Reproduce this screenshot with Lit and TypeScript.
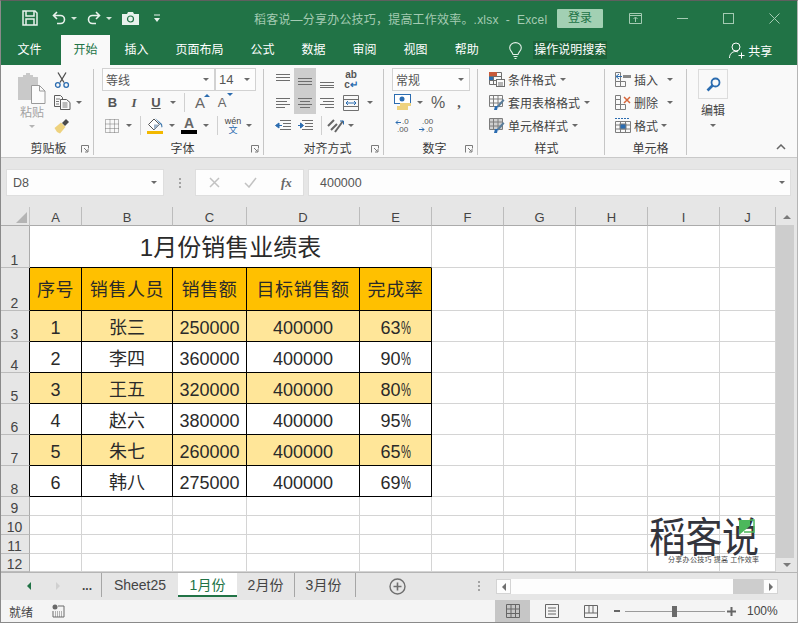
import { LitElement, html, css, svg } from "lit";
import { customElement } from "lit/decorators.js";

const base = css`
  * { box-sizing: border-box; }
  svg { display: block; flex: none; }
  .caret {
    display: block;
    width: 0;
    height: 0;
    border-left: 3px solid transparent;
    border-right: 3px solid transparent;
    border-top: 3px solid #6a6a6a;
  }
`;

const caret = html`<i class="caret"></i>`;

const ic = {
  paste: html`<svg width="30" height="31" viewBox="0 0 30 31">
    <path d="M1 4h5V2h3V0h4v2h3v2h5v23H1z" fill="#c9c9c9"/>
    <path d="M14.500 12.500h8l5.500 5.500v12.500h-13.500z" fill="#fbfbfb" stroke="#9a9a9a"/>
    <path d="M22.500 12.500v5.500h5.500" fill="none" stroke="#9a9a9a"/></svg>`,
  cut: html`<svg width="16" height="16" viewBox="0 0 16 16" fill="none">
    <path d="M4 0.500l6 10M12 0.500l-6 10" stroke="#4f4f4f" stroke-width="1.300"/>
    <circle cx="3.800" cy="13" r="2.300" stroke="#2b6cb0" stroke-width="1.300"/>
    <circle cx="12.200" cy="13" r="2.300" stroke="#2b6cb0" stroke-width="1.300"/></svg>`,
  copy: html`<svg width="17" height="15" viewBox="0 0 17 15" fill="none" stroke="#5c5c5c">
    <path d="M0.500 0.500h6l2 2v9h-8z"/><path d="M6.500 4.500h6l3.500 3v7h-9.500z" fill="#fbfbfb"/>
    <path d="M2 4h4M2 6.500h3M2 9h3M8.500 8h5M8.500 10h5M8.500 12h5" stroke="#7a7a7a"/></svg>`,
  brush: html`<svg width="16" height="16" viewBox="0 0 16 16">
    <path d="M0.500 10L7 4.500l4.500 4.500L6 15.500 3 14z" fill="#eed27e"/>
    <path d="M8 5l4-4 3 3-4 4z" fill="#4a4a4a"/></svg>`,
  bucket: html`<svg width="17" height="16" viewBox="0 0 17 16">
    <path d="M7 1L1.500 6.500 7 12l5.500-5.500z" fill="#fff" stroke="#555"/>
    <path d="M7 6.500h5.500L7 12z" fill="#9fb4c9"/>
    <path d="M8 0l7 6 .5 3-1 .5-.5-2.500z" fill="#3f78ad"/>
    <rect y="13" width="16" height="3.500" fill="#f2b800"/></svg>`,
  search: html`<svg width="15" height="15" viewBox="0 0 15 15" fill="none">
    <circle cx="9.500" cy="5.500" r="4" stroke="#2b6cb0" stroke-width="1.800"/>
    <path d="M6.500 8.500L1.500 13.500" stroke="#2b6cb0" stroke-width="2.600"/></svg>`,
  bulb: html`<svg width="13" height="17" viewBox="0 0 13 17" fill="none" stroke="#e5f0ea" stroke-width="1.100">
    <path d="M4 12.500C3.500 10 .7 8.800.7 5.800a5.800 5.200 0 0 1 11.600 0c0 3-2.800 4.200-3.300 6.700z"/><path d="M4.500 14.500h4M5.500 16.500h2"/></svg>`,
  user: html`<svg width="16" height="17" viewBox="0 0 16 17" fill="none" stroke="#fff">
    <circle cx="7" cy="5" r="4"/><path d="M.5 16c0-4 2.500-6.500 6.500-6.500 1 0 1.500.2 2 .4"/><path d="M9.500 13.500h6M12.500 10.500v6"/></svg>`,
};

const lines = (ys: number[], xs: [number, number][]) =>
  html`<svg width="15" height="16" viewBox="0 0 15 16" stroke="#6e6e6e">
    ${ys.map((y, i) => svg`<path d="M${xs[i][0]} ${y + 0.5}H${xs[i][1]}"/>`)}</svg>`;

const indent = (flip: boolean) => html`<svg width="16" height="11" viewBox="0 0 16 11">
    <path d="M5 .5h11M8 3.500h8M8 6.500h8M5 9.500h11" stroke="#6e6e6e"/>
    <path d="${flip ? "M1 5.500h4M3.500 3l3 2.500-3 2.500z" : "M3 5.500h4M4 3L.500 5.500 4 8z"}" fill="#2b6cb0" stroke="#2b6cb0"/></svg>`;

@customElement("ribbon-bar")
export class RibbonBar extends LitElement {
  static styles = [base, css`
    :host {
      display: flex;
      height: 93px;
      padding: 3px 0 0 4px;
      background: #f9f9f9;
      border-bottom: 1px solid #c9c9c9;
      font: 12px "Liberation Sans", "Noto Sans CJK SC", sans-serif;
      color: #444;
    }
    .sep { flex: none; width: 1px; height: 86px; margin-top: 1px; background: #c6c6c6; }
    .group { flex: none; display: flex; flex-direction: column; height: 89px; }
    .body { height: 73px; flex: none; }
    .label {
      display: grid;
      grid-template-columns: 1fr auto 1fr;
      align-items: center;
      height: 16px;
      line-height: 16px;
      color: #3a3a3a;
    }
    .label span { grid-column: 2; }
    .launch { justify-self: end; margin-right: 4px; }
    .row { display: flex; align-items: center; height: 23px; }
    .cell { display: flex; align-items: center; justify-content: center; height: 23px; }

    .g1 { width: 89px; }
    .g1 .body { display: flex; padding-left: 13px; }
    .paste { width: 30px; color: #a3a3a3; display: flex; flex-direction: column; align-items: center; padding-top: 5px; }
    .paste b { font-weight: 400; font-size: 12px; line-height: 14px; margin-top: 2px; }
    .paste .caret { margin-top: 5px; border-top-color: #b5b5b5; }
    .clip { margin-left: 7px; width: 36px; }
    .clip .row { gap: 5px; }

    .g2 { width: 169px; padding-left: 8px; }
    .combo {
      display: flex;
      align-items: center;
      justify-content: space-between;
      height: 23px;
      padding: 0 5px 0 3px;
      background: #fdfdfd;
      border: 1px solid #d2d2d2;
      font-size: 12px;
      color: #555;
    }
    .fonts { display: flex; }
    .fonts .name { width: 114px; border-right-width: 2px; }
    .fonts .size { width: 40px; border-left: none; font-size: 13px; }
    .f2, .f3 { display: grid; height: 23px; }
    .f2 { grid-template-columns: 21px 22px 22px 12px 10px 22px 22px; }
    .f3 { grid-template-columns: 20px 14px 8px 23px 10px 24px 10px 12px 20px 12px; }
    .bar { display: block; width: 1px; height: 19px; background: #d0d0d0; }
    .bold, .ital, .und { font: 700 13px "Liberation Sans", sans-serif; color: #555; }
    .ital { font: italic 700 13px "Liberation Serif", serif; }
    .und { text-decoration: underline; }
    .grow { position: relative; font: 15px "Liberation Sans", sans-serif; color: #666; }
    .grow.small { font-size: 13px; }
    .tri { position: absolute; right: 1px; top: 3px; width: 0; height: 0; border: 3px solid transparent; border-top: none; border-bottom: 3px solid #2b6cb0; }
    .tri.down { top: 2px; right: 0; border-bottom: none; border-top: 3px solid #2b6cb0; }
    .fc { display: flex; flex-direction: column; align-items: center; font: 700 14px/13px "Liberation Sans", sans-serif; color: #666; }
    .fc i { display: block; width: 16px; height: 4px; background: #000; }
    .wen { display: flex; flex-direction: column; align-items: center; font-size: 9px; line-height: 9px; color: #444; }
    .wen em { font-style: normal; color: #2b6cb0; font-size: 9px; }

    .g3 { width: 119px; padding-left: 8px; }
    .al { display: grid; grid-template-columns: 22px 22px 22px 26px 12px; grid-template-rows: 23px 23px; }
    .al .sel { grid-column: 2; grid-row: 1 / 3; background: #cecece; }
    .al .cell { grid-row: 1; z-index: 1; }
    .al .cell.r2 { grid-row: 2; }
    .c1 { grid-column: 1; } .c2 { grid-column: 2; } .c3 { grid-column: 3; } .c4 { grid-column: 4; } .c5 { grid-column: 5; }
    .al3 { display: grid; grid-template-columns: 22px 22px 10px 20px 10px; height: 23px; }
    .abc { display: flex; flex-direction: column; align-items: center; font: 700 10px/10px "Liberation Sans", sans-serif; color: #555; }
    .abc em { font-style: normal; color: #2b6cb0; }

    .g4 { width: 93px; padding-left: 8px; }
    .g4 .combo { width: 78px; }
    .nm { display: grid; grid-template-columns: 22px 12px 24px 18px; height: 23px; }
    .pct { font: 16px "Liberation Sans", sans-serif; color: #5a5a5a; }
    .comma { font: 700 14px "Liberation Serif", serif; color: #555; }
    .dec { gap: 9px; padding-left: 3px; justify-content: flex-start; }
    .dec text { font: 8px "Liberation Sans", sans-serif; fill: #555; }

    .g5 { width: 126px; padding: 0 0 0 11px; }
    .g5 .row, .g6 .row { height: 23px; gap: 3px; }
    .g5 .caret, .g6 .caret { margin-left: 1px; }
    .g6 { width: 81px; padding-left: 10px; }
    .g6 .wide { width: 12px; display: flex; justify-content: flex-end; }
    .g6 .caret { margin-left: 0; }

    .g7 { width: 52px; align-items: center; }
    .g7 .body { display: flex; flex-direction: column; align-items: center; }
    .find { width: 30px; height: 30px; margin-top: 1px; border: 1px solid #dcdcdc; display: flex; align-items: center; justify-content: center; }
    .g7 span { margin-top: 4px; line-height: 16px; }
    .g7 .caret { margin-top: 5px; }
    .fold { margin: 76px 0 0 37px; }
  `];

  launcher() {
    return html`<svg class="launch" width="8" height="8" viewBox="0 0 8 8" fill="none" stroke="#7a7a7a">
      <path d="M.5 7.500v-7h7v3M3 3l3.500 3.500M7 4v3H4"/></svg>`;
  }

  label(t: string, launch = true) {
    return html`<div class="label"><span>${t}</span>${launch ? this.launcher() : ""}</div>`;
  }

  styleIcon(k: number) {
    if (k === 0)
      return html`<svg width="16" height="15" viewBox="0 0 16 15" stroke="#6e6e6e" fill="none">
        <path d="M.5.500h12v12H.5zM.5 4.500h12M.5 8.500h12M4.500.5v12"/>
        <rect y="0" width="8" height="4" fill="#c85a3a" stroke="none"/><rect y="5" width="4" height="3" fill="#2b6cb0" stroke="none"/>
        <rect x="7.500" y="7.500" width="8" height="7" fill="#fbfbfb"/><path d="M9 11h5M9 13h5"/></svg>`;
    return html`<svg width="16" height="15" viewBox="0 0 16 15" stroke="#7c7c7c" fill="none">
        ${k === 2 ? svg`<rect x="1" y="1" width="12" height="10" fill="#cfcfcf" stroke="none"/>` : ""}
        <path d="M.5.500h13v11H.5zM.5 4h13M.5 8h13M4.500.5v11M9 .5v11"/>
        <path d="M8 11l6-7 1.500 1.500-6 7z" fill="#5a7d9a" stroke="none"/>
        <path d="M5 15l1-4h3l-1 4z" fill="#2b6cb0" stroke="none"/></svg>`;
  }

  cellIcon(k: number) {
    const mark = [
      svg`<path d="M8 5.500h8" stroke="#888" stroke-width="3"/><path d="M1 5.500h6M4 3L1 5.500 4 8" stroke="#2b6cb0" fill="none"/>`,
      svg`<path d="M9 3l6 6M15 3l-6 6" stroke="#d6663a" stroke-width="1.500"/>`,
      svg`<path d="M.5 4.500h15v11H.5zM5.500 4.500v11M10.500 4.500v11M.5 8h15M.5 12h15"/><rect x="5" y="7" width="6" height="5" fill="#2b6cb0"/><path d="M0 1.500h15" stroke="#2b6cb0" stroke-dasharray="2 1"/>`,
    ][k];
    return html`<svg width="16" height="17" viewBox="0 0 16 17" stroke="#7c7c7c" fill="none">
      ${k < 2 ? svg`<path d="M.5 1.500h5v4h-5zM.5 5.500h5v5h-5zM.5 10.500h5v5h-5zM5.500 10.500h5v5h-5z"/>` : ""}${mark}</svg>`;
  }

  render() {
    return html`
      <div class="group g1">
        <div class="body">
          <div class="paste">${ic.paste}<b>粘贴</b>${caret}</div>
          <div class="clip">
            <div class="row">${ic.cut}</div>
            <div class="row">${ic.copy}${caret}</div>
            <div class="row">${ic.brush}</div>
          </div>
        </div>
        ${this.label("剪贴板")}
      </div>
      <div class="sep"></div>

      <div class="group g2">
        <div class="body">
          <div class="fonts">
            <div class="combo name">等线${caret}</div>
            <div class="combo size">14${caret}</div>
          </div>
          <div class="f2">
            <div class="cell bold">B</div>
            <div class="cell ital">I</div>
            <div class="cell und">U</div>
            <div class="cell">${caret}</div>
            <div class="cell"><i class="bar"></i></div>
            <div class="cell grow">A<i class="tri"></i></div>
            <div class="cell grow small">A<i class="tri down"></i></div>
          </div>
          <div class="f3">
            <div class="cell"><svg width="14" height="14" viewBox="0 0 14 14" fill="none" stroke="#777" stroke-dasharray="1 1"><path d="M.5.500h13v13H.5zM.5 5h13M.5 9.500h13M5 .5v13M9.500.5v13"/></svg></div>
            <div class="cell">${caret}</div>
            <div class="cell"><i class="bar"></i></div>
            <div class="cell">${ic.bucket}</div>
            <div class="cell">${caret}</div>
            <div class="cell fc">A<i></i></div>
            <div class="cell">${caret}</div>
            <div class="cell"><i class="bar"></i></div>
            <div class="cell wen">wén<em>文</em></div>
            <div class="cell">${caret}</div>
          </div>
        </div>
        ${this.label("字体")}
      </div>
      <div class="sep"></div>

      <div class="group g3">
        <div class="body">
          <div class="al">
            <div class="sel"></div>
            <div class="cell c1">${lines([2, 5, 8], [[0, 14], [0, 14], [0, 14]])}</div>
            <div class="cell c2">${lines([6, 9, 12], [[0, 14], [0, 14], [0, 14]])}</div>
            <div class="cell c3">${lines([10, 13, 15], [[0, 14], [0, 14], [0, 14]])}</div>
            <div class="cell c4 abc">ab<span>c<em>↵</em></span></div>
            <div class="cell c1 r2">${lines([3, 6, 9, 12], [[0, 14], [0, 11], [0, 14], [0, 9]])}</div>
            <div class="cell c2 r2">${lines([3, 6, 9, 12], [[0, 14], [2, 12], [0, 14], [2, 12]])}</div>
            <div class="cell c3 r2">${lines([3, 6, 9, 12], [[0, 14], [3, 14], [0, 14], [5, 14]])}</div>
            <div class="cell c4 r2"><svg width="16" height="16" viewBox="0 0 16 16" fill="none" stroke="#707070"><path d="M.5.500h15v15H.5zM.5 4.500h15M.5 11.500h15"/><path d="M3 8h10M5 6L3 8l2 2M11 6l2 2-2 2" stroke="#2b6cb0"/></svg></div>
            <div class="cell c5 r2">${caret}</div>
          </div>
          <div class="al3">
            <div class="cell">${indent(false)}</div>
            <div class="cell">${indent(true)}</div>
            <div class="cell"><i class="bar"></i></div>
            <div class="cell"><svg width="18" height="16" viewBox="0 0 18 16" fill="none"><path d="M1 8l6-6M4 12l6-6M8 14L16 3" stroke="#666" stroke-width="2"/><path d="M13 3h3.500v3.500" stroke="#2b6cb0"/></svg></div>
            <div class="cell">${caret}</div>
          </div>
        </div>
        ${this.label("对齐方式")}
      </div>
      <div class="sep"></div>

      <div class="group g4">
        <div class="body">
          <div class="combo">常规${caret}</div>
          <div class="nm">
            <div class="cell"><svg width="18" height="17" viewBox="0 0 18 17"><rect x=".5" y=".5" width="16" height="9" fill="#fff" stroke="#2b6cb0"/><circle cx="8" cy="5" r="2.500" fill="#2b6cb0"/><rect x="6" y="9" width="11" height="3" fill="#eed27e"/><rect x="3" y="12" width="11" height="4" fill="#eed27e"/></svg></div>
            <div class="cell">${caret}</div>
            <div class="cell pct">%</div>
            <div class="cell comma">,</div>
          </div>
          <div class="row dec">
            <svg width="15" height="16" viewBox="0 0 15 16"><path d="M1 4.500h5M3 2.500l-2 2 2 2" fill="none" stroke="#2b6cb0"/><text x="7" y="6">.0</text><text x="2" y="14">.00</text></svg>
            <svg width="15" height="16" viewBox="0 0 15 16"><text x="3" y="6">.00</text><path d="M0 11.500h5M3 9.500l2 2-2 2" fill="none" stroke="#2b6cb0"/><text x="7" y="14">.0</text></svg>
          </div>
        </div>
        ${this.label("数字")}
      </div>
      <div class="sep"></div>

      <div class="group g5">
        <div class="body">
          <div class="row">${this.styleIcon(0)}条件格式${caret}</div>
          <div class="row">${this.styleIcon(1)}套用表格格式${caret}</div>
          <div class="row">${this.styleIcon(2)}单元格样式${caret}</div>
        </div>
        ${this.label("样式", false)}
      </div>
      <div class="sep"></div>

      <div class="group g6">
        <div class="body">
          <div class="row">${this.cellIcon(0)}插入<span class="wide">${caret}</span></div>
          <div class="row">${this.cellIcon(1)}删除<span class="wide">${caret}</span></div>
          <div class="row">${this.cellIcon(2)}格式${caret}</div>
        </div>
        ${this.label("单元格", false)}
      </div>
      <div class="sep"></div>

      <div class="group g7">
        <div class="body">
          <div class="find">${ic.search}</div>
          <span>编辑</span>
          ${caret}
        </div>
      </div>
      <svg class="fold" width="10" height="6" viewBox="0 0 10 6" fill="none" stroke="#666" stroke-width="1.500"><path d="M1 5l4-4 4 4"/></svg>
    `;
  }
}

const columns = ["A", "B", "C", "D", "E", "F", "G", "H", "I", "J"];
const heads = ["序号", "销售人员", "销售额", "目标销售额", "完成率"];
const people: [string, string, number, number, number][] = [
  ["1", "张三", 250000, 400000, 63],
  ["2", "李四", 360000, 400000, 90],
  ["3", "王五", 320000, 400000, 80],
  ["4", "赵六", 380000, 400000, 95],
  ["5", "朱七", 260000, 400000, 65],
  ["6", "韩八", 275000, 400000, 69],
];

@customElement("sheet-view")
export class SheetView extends LitElement {
  static styles = [base, css`
    :host { display: block; position: relative; width: 776px; height: 365px; overflow: hidden; }
    .grid {
      display: grid;
      grid-template-columns: 30px 52px 91px 74px 113px 72px 72px 72px 72px 72px 56px;
      grid-template-rows: 19px 42px 43px repeat(6, 31px) 19px 19px 19px 18px;
      background: #fff;
      font: 18px/24px "Liberation Sans", "Noto Sans CJK SC", sans-serif;
      color: #2a2a2a;
    }
    .corner, .ch, .rh { background: #e6e6e6; }
    .corner { border-right: 1px solid #c4c4c4; border-bottom: 1px solid #ababab; padding: 5px 0 0 16px; }
    .corner i { display: block; width: 11px; height: 11px; background: #b4b4b4; clip-path: polygon(100% 0, 100% 100%, 0 100%); }
    .ch {
      display: flex; align-items: center; justify-content: center;
      border-right: 1px solid #bcbcbc;
      border-bottom: 1px solid #ababab;
      font-size: 13px; line-height: 18px; color: #444; padding-top: 3px;
    }
    .rh {
      display: flex; align-items: flex-end; justify-content: center;
      border-right: 1px solid #ababab;
      border-bottom: 1px solid #bcbcbc;
      font-size: 14px; line-height: 14px; color: #444;
    }
    .rh.dark { border-right-color: #000; }
    .c {
      border-right: 1px solid #d4d4d4;
      border-bottom: 1px solid #d4d4d4;
    }
    .t {
      display: flex; align-items: center; justify-content: center;
      border-right: 1px solid #000;
      border-bottom: 1px solid #000;
      padding-top: 4px;
      white-space: nowrap;
    }
    .title {
      grid-column: span 5;
      display: flex; align-items: center; justify-content: center;
      border-right: 1px solid #d4d4d4;
      border-bottom: 1px solid #000;
      font-size: 24px; line-height: 30px; padding-top: 2px;
    }
    .head { background: #ffc000; padding-top: 2px; letter-spacing: .6px; }
    .band { background: #ffe699; }
    .sign { display: inline-block; width: 10px; transform: scaleX(.62); transform-origin: left; }
    .logo {
      position: absolute; left: 649px; top: 306px; width: 114px;
      font-family: "Noto Sans CJK SC", sans-serif; color: #33343c;
    }
    .logo b {
      display: block; font-weight: 400; font-size: 37px; line-height: 38px; white-space: nowrap;
      transform: scaleY(1.12); transform-origin: top; letter-spacing: -.5px;
    }
    .logo span { display: block; margin: 5px 0 0 19px; font-size: 7px; line-height: 7px; letter-spacing: .3px; white-space: nowrap; color: #444; }
    .logo svg { position: absolute; left: 89px; top: 5px; }
  `];

  render() {
    return html`
      <div class="grid">
        <div class="corner"><i></i></div>
        ${columns.map((c) => html`<div class="ch">${c}</div>`)}

        <div class="rh">1</div>
        <div class="title">1月份销售业绩表</div>
        ${columns.slice(5).map(() => html`<div class="c"></div>`)}

        <div class="rh dark">2</div>
        ${heads.map((h) => html`<div class="t head">${h}</div>`)}
        ${columns.slice(5).map(() => html`<div class="c"></div>`)}

        ${people.map((p, i) => html`
          <div class="rh dark">${i + 3}</div>
          ${p.slice(0, 4).map((v) => html`<div class="t ${i % 2 ? "" : "band"}">${v}</div>`)}
          <div class="t ${i % 2 ? "" : "band"}">${p[4]}<span class="sign">%</span></div>
          ${columns.slice(5).map(() => html`<div class="c"></div>`)}
        `)}

        ${[9, 10, 11, 12].map((r) => html`
          <div class="rh">${r}</div>
          ${columns.map(() => html`<div class="c"></div>`)}
        `)}
      </div>
      <div class="logo">
        <b>稻客说</b>
        <svg width="18" height="18" viewBox="0 0 18 18"><path d="M1 2h11v6L1 17z" fill="#4cb85c"/><path d="M12 2h4v12H6" fill="none" stroke="#4cb85c" stroke-width="1.500"/></svg>
        <span>分享办公技巧 提高 工作效率</span>
      </div>
    `;
  }
}

@customElement("app-root")
export class AppRoot extends LitElement {
  static styles = [base, css`
    :host {
      display: block;
      position: relative;
      width: 798px;
      height: 623px;
      overflow: hidden;
      background: #e6e6e6;
      font: 12px "Liberation Sans", "Noto Sans CJK SC", sans-serif;
    }
    .frame {
      position: absolute; inset: 0; pointer-events: none;
      border: 1px solid #8a8a8a; border-top-color: #5f5f5f; border-right-color: #b5b5b5;
    }

    .titlebar { display: flex; align-items: center; height: 35px; padding-top: 1px; background: #217346; color: #a4cbb3; }
    .qat { flex: none; display: flex; align-items: center; width: 254px; padding-left: 22px; }
    .qat .caret { border-top-color: #d3e5da; margin: 0 10px 0 5px; }
    .qat svg.mr { margin-right: 14px; }
    .doc { width: 303px; flex: none; white-space: nowrap; letter-spacing: .2px; }
    .login { flex: none; width: 46px; height: 19px; line-height: 19px; text-align: center; background: #a2d0b3; color: #217346; border-radius: 1px; }
    .wins { display: flex; align-items: center; gap: 35px; margin-left: 26px; }

    .tabs { display: flex; align-items: flex-end; height: 30px; padding-left: 5px; background: #217346; color: #fff; }
    .tab { height: 30px; line-height: 30px; padding: 0 12.500px; margin-right: 2px; }
    .tab.file { margin-right: 7px; }
    .tab.on { background: #f9f9f9; color: #217346; height: 30px; }
    .tell { display: flex; align-items: center; margin-left: 16px; gap: 11px; height: 30px; }
    .tell span { background: #1c6239; line-height: 18px; padding: 0 1px; color: #fff; }
    .share { display: flex; align-items: center; gap: 3px; margin-left: 122px; height: 30px; }

    .fbar { display: flex; height: 49px; padding: 11px 0 0 6px; }
    .box { height: 27px; background: #fdfdfd; border: 1px solid #dedede; display: flex; align-items: center; color: #555; font-size: 12.500px; }
    .namebox { width: 158px; padding: 0 6px; justify-content: space-between; }
    .dots { width: 31px; height: 27px; display: flex; flex-direction: column; gap: 2px; align-items: center; justify-content: center; }
    .dots i { width: 2px; height: 2px; background: #a3a3a3; display: block; }
    .fn { width: 109px; gap: 24px; padding-left: 13px; }
    .fx { font: italic 700 13px "Liberation Serif", serif; color: #666; }
    .input { width: 483px; margin-left: 4px; padding: 0 5px 0 11px; justify-content: space-between; }

    .main { display: flex; height: 365px; }
    .vs { width: 22px; position: relative; }
    .vs .thumb { position: absolute; left: 0; right: 4px; top: 18px; bottom: 14px; background: #cdcdcd; }
    .vs .up, .vs .down { position: absolute; left: 7px; width: 0; height: 0; border: 4px solid transparent; }
    .vs .up { top: 8px; border-top: none; border-bottom: 4px solid #7a7a7a; }
    .vs .down { bottom: 5px; border-bottom: none; border-top: 4px solid #7a7a7a; }

    .sheets { display: flex; align-items: flex-start; height: 28px; border-top: 1px solid #b5b5b5; font-size: 14px; color: #444; }
    .nav { display: flex; align-items: center; height: 26px; width: 101px; padding-left: 27px; }
    .nav .l, .nav .r { width: 0; height: 0; border: 4px solid transparent; }
    .nav .l { border-left: none; border-right: 4px solid #217346; }
    .nav .r { margin-left: 25px; border-right: none; border-left: 4px solid #d0d0d0; }
    .nav b { margin-left: 22px; font: 700 12px "Liberation Sans", sans-serif; color: #444; }
    .sh { height: 24px; line-height: 24px; text-align: center; border-left: 1px solid #a6a6a6; }
    .sh.a { width: 77px; }
    .sh.on { width: 59px; background: #fff; color: #217346; border-left: none; border-bottom: 2px solid #217346; }
    .sh.c { width: 57px; border-left: none; }
    .sh.d { width: 61px; padding-right: 3px; }
    .sh.end { width: 1px; }
    .plus { margin: 5px 0 0 33px; }
    .sdots { display: flex; flex-direction: column; gap: 2px; margin: 8px 0 0 72px; }
    .sdots i { display: block; width: 2px; height: 2px; background: #a3a3a3; }
    .hs { display: flex; margin: 6px 0 0 16px; height: 15px; width: 282px; }
    .hbtn { width: 15px; background: #fdfdfd; border: 1px solid #d4d4d4; display: flex; align-items: center; justify-content: center; }
    .hbtn i { width: 0; height: 0; border: 4px solid transparent; }
    .hbtn .l { border-left: none; border-right: 4px solid #6f6f6f; }
    .hbtn .r { border-right: none; border-left: 4px solid #6f6f6f; }
    .track { width: 222px; background: #fdfdfd; }
    .hthumb { width: 30px; background: #cdcdcd; }

    .status { display: flex; align-items: center; height: 23px; padding: 0 0 1px 9px; background: #f4f4f4; color: #444; }
    .ready { width: 43px; }
    .modes { display: flex; margin-left: 430px; align-self: stretch; }
    .mode { width: 39px; display: flex; align-items: center; justify-content: center; }
    .mode.on { width: 35px; background: #c6c6c6; margin-right: 2px; }
    .zoom { display: flex; align-items: center; margin-left: 4px; }
    .zoom .minus { width: 6px; height: 2px; background: #666; }
    .zoom .track2 { position: relative; width: 100px; height: 1px; margin: 0 2px 0 5px; background: #9a9a9a; }
    .zoom .knob { position: absolute; left: 47px; top: -5px; width: 5px; height: 11px; background: #6a6a6a; }
    .pct { margin-left: 11px; font-size: 12px; color: #444; }
  `];

  render() {
    return html`
      <div class="titlebar">
        <div class="qat">
          <svg class="mr" width="16" height="16" viewBox="0 0 16 16" fill="none" stroke="#e8f2ec" stroke-width="1.500"><path d="M1 1h12l2 2v12H1z"/><path d="M4 1v5h8V1M4 15V9h8v6"/></svg>
          <svg width="14" height="15" viewBox="0 0 14 15" fill="none" stroke="#e8f2ec" stroke-width="1.600"><path d="M5 1L1.500 4.500 5 8M2 4.500h6.500a4 4 0 0 1 0 8H5"/></svg>
          <i class="caret"></i>
          <svg width="14" height="15" viewBox="0 0 14 15" fill="none" stroke="#e8f2ec" stroke-width="1.600"><path d="M9 1l3.500 3.500L9 8M12 4.500H5.500a4 4 0 0 0 0 8H9"/></svg>
          <i class="caret"></i>
          <svg class="mr" width="17" height="14" viewBox="0 0 17 14"><path d="M0 3h5l1-2h5l1 2h5v11H0z" fill="#e8f2ec"/><circle cx="8.500" cy="8" r="3" fill="#e8f2ec" stroke="#217346" stroke-width="1.200"/></svg>
          <svg width="8" height="9" viewBox="0 0 8 9"><path d="M1 1h6" stroke="#e8f2ec"/><path d="M1 4h6L4 8z" fill="#e8f2ec"/></svg>
        </div>
        <div class="doc">稻客说—分享办公技巧，提高工作效率。.xlsx&nbsp; -&nbsp; Excel</div>
        <div class="login">登录</div>
        <div class="wins">
          <svg width="13" height="11" viewBox="0 0 13 11" fill="none" stroke="#a4cbb3"><path d="M.5.500h12v10H.5zM.5 2.500h12M6.500 9V4.500M4.500 6l2-2 2 2"/></svg>
          <svg width="11" height="1" viewBox="0 0 11 1"><rect width="11" height="1" fill="#a4cbb3"/></svg>
          <svg width="11" height="11" viewBox="0 0 11 11" fill="none" stroke="#a4cbb3"><rect x=".5" y=".5" width="10" height="10"/></svg>
          <svg width="11" height="11" viewBox="0 0 11 11" fill="none" stroke="#a4cbb3"><path d="M.5.500l10 10M10.500.5l-10 10"/></svg>
        </div>
      </div>

      <div class="tabs">
        <div class="tab file">文件</div>
        <div class="tab on">开始</div>
        <div class="tab">插入</div>
        <div class="tab">页面布局</div>
        <div class="tab">公式</div>
        <div class="tab">数据</div>
        <div class="tab">审阅</div>
        <div class="tab">视图</div>
        <div class="tab">帮助</div>
        <div class="tell">${ic.bulb}<span>操作说明搜索</span></div>
        <div class="share">${ic.user}共享</div>
      </div>

      <ribbon-bar></ribbon-bar>

      <div class="fbar">
        <div class="box namebox">D8${caret}</div>
        <div class="dots"><i></i><i></i><i></i></div>
        <div class="box fn">
          <svg width="11" height="11" viewBox="0 0 11 11" fill="none" stroke="#c2c2c2" stroke-width="1.500"><path d="M1 1l9 9M10 1l-9 9"/></svg>
          <svg width="13" height="11" viewBox="0 0 13 11" fill="none" stroke="#c2c2c2" stroke-width="1.500"><path d="M1 6l4 4 7-9"/></svg>
          <span class="fx">fx</span>
        </div>
        <div class="box input">400000${caret}</div>
      </div>

      <div class="main">
        <sheet-view></sheet-view>
        <div class="vs"><i class="up"></i><div class="thumb"></div><i class="down"></i></div>
      </div>

      <div class="sheets">
        <div class="nav"><i class="l"></i><i class="r"></i><b>...</b></div>
        <div class="sh a">Sheet25</div>
        <div class="sh on">1月份</div>
        <div class="sh c">2月份</div>
        <div class="sh d">3月份</div>
        <div class="sh end"></div>
        <svg class="plus" width="17" height="17" viewBox="0 0 17 17" fill="none" stroke="#6f6f6f"><circle cx="8.500" cy="8.500" r="7.500" stroke-width="1.400"/><path d="M8.500 4.500v8M4.500 8.500h8" stroke-width="1.600"/></svg>
        <div class="sdots"><i></i><i></i><i></i></div>
        <div class="hs">
          <div class="hbtn"><i class="l"></i></div>
          <div class="track"></div>
          <div class="hthumb"></div>
          <div class="hbtn"><i class="r"></i></div>
        </div>
      </div>

      <div class="status">
        <div class="ready">就绪</div>
        <svg width="13" height="14" viewBox="0 0 13 14"><circle cx="3" cy="3" r="2.500" fill="#6a6a6a"/><path d="M6 2h6v11H1V7" fill="none" stroke="#6a6a6a"/><path d="M3 8h8M3 10h8M3 12h8" stroke="#6a6a6a" stroke-dasharray="1 1"/></svg>
        <div class="modes">
          <div class="mode on"><svg width="14" height="14" viewBox="0 0 14 14" fill="none" stroke="#666"><path d="M.5.500h13v13H.5zM.5 5h13M.5 9.500h13M5 .5v13M9.500.5v13"/></svg></div>
          <div class="mode"><svg width="14" height="14" viewBox="0 0 14 14" fill="none" stroke="#666"><path d="M.5.500h13v13H.5zM3 4h8M3 7h8M3 10h8"/></svg></div>
          <div class="mode"><svg width="14" height="13" viewBox="0 0 14 13" fill="none" stroke="#666"><path d="M.5.500h13v12H.5zM.5 8h13M5 .5v7.500M9 .5v7.500"/></svg></div>
        </div>
        <div class="zoom">
          <i class="minus"></i>
          <div class="track2"><i class="knob"></i></div>
          <svg width="9" height="9" viewBox="0 0 9 9" stroke="#666" stroke-width="2"><path d="M0 4.500h9M4.500 0v9"/></svg>
        </div>
        <div class="pct">100%</div>
      </div>
      <div class="frame"></div>
    `;
  }
}
